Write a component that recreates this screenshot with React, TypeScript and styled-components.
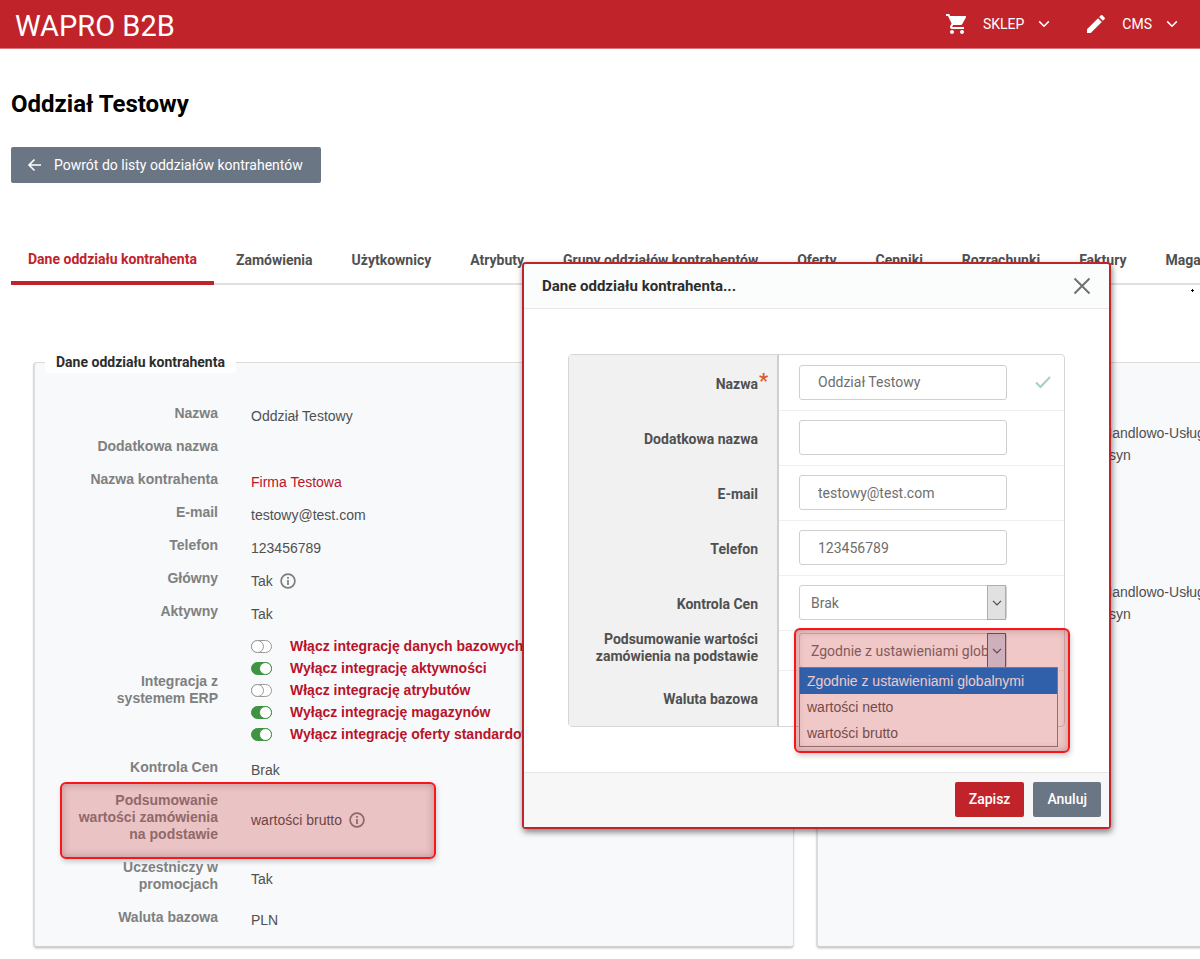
import React from "react";
import styled, { createGlobalStyle, css } from "styled-components";
import { MdShoppingCart, MdEdit } from "react-icons/md";

const GlobalStyle = createGlobalStyle`
  *, *::before, *::after { box-sizing: border-box; }
  body {
    margin: 0;
    background: #fff;
    font-family: Roboto, "Liberation Sans", sans-serif;
    font-size: 14px;
    color: #505050;
    overflow: hidden;
  }
  button, input, select { font: inherit; color: inherit; margin: 0; }
  a { color: inherit; text-decoration: none; }
`;

const Page = styled.div`
  position: relative;
  min-height: 100vh;
  overflow: hidden;
`;

const TopBar = styled.header`
  display: flex;
  align-items: center;
  justify-content: space-between;
  height: 49px;
  padding: 0 22px 0 15px;
  background: #c1232b;
  border-bottom: 1px solid #d9777c;
  color: #fff;
`;

const Brand = styled.a`
  padding-top: 4px;
  font-size: 29px;
  line-height: 32px;
`;

const TopNav = styled.nav`
  display: flex;
  gap: 34px;
`;

const TopNavButton = styled.button`
  display: flex;
  align-items: center;
  padding: 0;
  border: 0;
  background: none;
  gap: 14px;
  line-height: 24px;
  cursor: pointer;
`;

const Content = styled.main`
  padding-left: 11px;
`;

const Title = styled.h1`
  margin: 41px 0 28px;
  font-size: 24px;
  line-height: 29px;
  font-weight: 700;
  color: #000;
`;

const BackLink = styled.a`
  display: inline-flex;
  align-items: center;
  gap: 12px;
  height: 36px;
  padding: 0 18px 0 16px;
  border-radius: 2px;
  background: #6b7684;
  color: #fff;
`;

const Tabs = styled.nav`
  display: flex;
  gap: 5px;
  margin-top: 52px;
  height: 50px;
  box-shadow: inset 0 -2px #e0e0e0;
`;

const Tab = styled.a<{ $active?: boolean }>`
  flex: none;
  padding: 0 17px;
  line-height: 51px;
  font-weight: 700;
  white-space: nowrap;
  ${(p) => p.$active && css`
    line-height: 49px;
    color: #c1232b;
    box-shadow: inset 0 -4px #c1232b;
  `}
`;

const PointerMark = styled.svg`
  position: absolute;
  right: 6px;
  top: 289px;
`;

const Panels = styled.div`
  display: grid;
  grid-template-columns: 67% 67%;
  gap: 22px;
  padding: 0 31px 0 22px;
  margin-top: 67px;
`;

const panelSurface = css`
  min-width: 0;
  border: 1px solid #dcdcdc;
  border-left-width: 2px;
  border-bottom: 2px solid #cfcfcf;
  border-radius: 4px;
  background: #f7f9fb;
  box-shadow: 0 1px 2px #dddddd;
`;

const Panel = styled.fieldset`
  ${panelSurface}
  min-height: 596px;
  margin: 0;
  padding: 24px 0 12px 36px;
`;

const Legend = styled.legend`
  margin-left: -26px;
  padding: 0 11px;
  line-height: 21px;
  border-radius: 4px;
  background: #fff;
  font-weight: 700;
  color: #2d2d2d;
`;

const CompanyPanel = styled.section`
  ${panelSurface}
  display: grid;
  align-content: start;
  gap: 115px;
  margin-top: 10px;
  padding: 59px 0 0 284px;
  font-family: "Liberation Sans", Arial, sans-serif;
`;

const Company = styled.p`
  margin: 0;
  line-height: 22px;
  white-space: nowrap;
`;

const Details = styled.dl`
  margin: 0;
  font-family: "Liberation Sans", Arial, sans-serif;
  line-height: 17px;
`;

const DetailRow = styled.div`
  position: relative;
  display: grid;
  grid-template-columns: 147px 1fr;
  align-items: center;
  gap: 33px;
  padding: 8px 0;
  min-height: 33px;
`;

const IntegrationRow = styled(DetailRow)`
  padding: 7px 0 6px;
`;

const DetailLabel = styled.dt`
  text-align: right;
  font-weight: 700;
  color: #808080;
`;

const DetailValue = styled.dd`
  display: flex;
  align-items: center;
  gap: 7px;
  margin: 0;
  padding-top: 6px;
  height: 17px;
  white-space: nowrap;
  svg { flex: none; margin-bottom: 2px; }
`;

const AccentLink = styled.a`
  color: #b9132a;
`;

const ToggleList = styled.dd`
  display: grid;
  margin: 0;
`;

const ToggleRow = styled.label`
  display: flex;
  align-items: center;
  gap: 18px;
  height: 22px;
  font-weight: 700;
  color: #b9132a;
  white-space: nowrap;
`;

const Toggle = styled.input`
  appearance: none;
  position: relative;
  width: 21px;
  height: 13px;
  border: 1px solid #999;
  border-radius: 7px;
  background: #fff;
  &::after {
    content: "";
    position: absolute;
    top: -1px;
    left: -1px;
    width: 13px;
    height: 13px;
    border: 1px solid #999;
    border-radius: 50%;
    background: #fff;
  }
  &:checked {
    border-color: #3e9440;
    background: #3e9440;
  }
  &:checked::after {
    left: 7px;
    border-color: #3e9440;
  }
`;

const Highlight = styled.div`
  position: absolute;
  border: 2px solid #f8161b;
  border-radius: 6px;
  background: rgba(195, 35, 35, 0.25);
  box-shadow: inset 0 0 9px rgba(90, 20, 20, 0.3), 1px 3px 5px rgba(0, 0, 0, 0.18);
  pointer-events: none;
`;

const RowHighlight = styled(Highlight)`
  top: -2px;
  bottom: -8px;
  left: -11px;
  width: 376px;
`;

const Dialog = styled.section`
  position: absolute;
  top: 262px;
  right: 89px;
  width: 589px;
  border: 2px solid #c1232b;
  border-radius: 4px;
  background: #fff;
  box-shadow: 1px 3px 6px rgba(0, 0, 0, 0.5);
`;

const DialogHeader = styled.header`
  display: flex;
  align-items: center;
  justify-content: space-between;
  height: 45px;
  padding: 0 18px;
  border-bottom: 1px solid #e6e8e8;
  border-radius: 2px 2px 0 0;
  background: #fbfdfc;
`;

const DialogTitle = styled.h2`
  margin: 0;
  font-size: 15px;
  line-height: 20px;
  font-weight: 700;
  color: #2d2d2d;
`;

const CloseButton = styled.button`
  display: flex;
  padding: 0;
  border: 0;
  background: none;
  color: #707070;
`;

const Fields = styled.div`
  margin: 45px 44px;
  border: 1px solid #d6d6d6;
  border-radius: 4px;
`;

const Field = styled.div`
  display: grid;
  grid-template-columns: 210px 1fr;
  min-height: 55px;
  &:last-child { min-height: 56px; }
`;

const CompactField = styled(Field)`
  min-height: 40px;
`;

const FieldLabel = styled.label<{ $tight?: boolean }>`
  position: relative;
  display: flex;
  align-items: center;
  justify-content: flex-end;
  padding: ${(p) => (p.$tight ? "0 19px 4px 16px" : "3px 19px 0 16px")};
  border-right: 2px solid #cfcfcf;
  background: #f1f1f1;
  line-height: 17px;
  text-align: right;
  font-weight: 700;
  color: #505050;
`;

const Required = styled.span`
  position: absolute;
  right: 9px;
  top: 14px;
  font-size: 20px;
  line-height: 24px;
  color: #dc5a28;
`;

const FieldControl = styled.div<{ $tight?: boolean }>`
  position: relative;
  z-index: ${(p) => (p.$tight ? 1 : 0)};
  display: flex;
  align-items: center;
  justify-content: space-between;
  padding: ${(p) => (p.$tight ? "2px 12px 2px 20px" : "9px 12px 10px 20px")};
  ${Field}:not(:first-child) > & { border-top: 1px solid #efefef; }
`;

const TextInput = styled.input`
  width: 208px;
  height: 35px;
  padding: 0 18px;
  border: 1px solid #cfcfcf;
  border-radius: 3px;
  background: #fff;
  color: #6e6e6e;
`;

const SelectBox = styled.div`
  position: relative;
  width: 208px;
  height: 35px;
`;

const Select = styled.select`
  appearance: none;
  width: 100%;
  height: 100%;
  padding: 0 19px 0 11px;
  border: 1px solid #cfcfcf;
  border-radius: 3px;
  background: #fff;
  color: #6e6e6e;
`;

const SelectArrow = styled.span<{ $open?: boolean }>`
  position: absolute;
  top: 0;
  right: 1px;
  bottom: 0;
  display: grid;
  place-items: center;
  width: 19px;
  border: 1px solid ${(p) => (p.$open ? "#0f6cc4" : "#adadad")};
  background: ${(p) => (p.$open ? "#d2dff0" : "#e1e1e1")};
  pointer-events: none;
`;

const OptionList = styled.ul`
  position: absolute;
  top: 100%;
  left: 0;
  width: 259px;
  margin: -1px 0 0;
  padding: 0;
  border: 1px solid #868686;
  background: #fff;
  list-style: none;
  font-family: "Liberation Sans", Arial, sans-serif;
  color: #5a5a5a;
`;

const Option = styled.li<{ $selected?: boolean }>`
  padding: 0 7px;
  line-height: 26px;
  white-space: nowrap;
  ${(p) => p.$selected && css`
    background: #0075d7;
    color: #fff;
  `}
`;

const FieldHighlight = styled(Highlight)`
  top: -3px;
  left: 15px;
  width: 276px;
  height: 125px;
`;

const DialogFooter = styled.footer`
  display: flex;
  justify-content: flex-end;
  gap: 9px;
  padding: 9px 8px 10px;
  border-top: 1px solid #e6e6e6;
  background: #f7f7f7;
`;

const ActionButton = styled.button<{ $primary?: boolean }>`
  height: 35px;
  padding: 0 14px 2px;
  border: 0;
  border-radius: 2px;
  background: ${(p) => (p.$primary ? "#c1232b" : "#6b7684")};
  color: #fff;
  font-weight: 500;
`;

function Chevron({ size = 12 }: { size?: number }) {
  return (
    <svg width={size} height={size} viewBox="0 0 12 12" fill="none" stroke="currentColor" strokeWidth="1.5" aria-hidden="true">
      <path d="M1.2 3.4 6 8.2l4.8-4.8" />
    </svg>
  );
}

function InfoIcon() {
  return (
    <svg width="16" height="16" viewBox="0 0 16 16" fill="none" stroke="#7d7d7d" strokeWidth="1.7" aria-hidden="true">
      <circle cx="8" cy="8" r="6.900" />
      <path d="M8 7v5M8 4v1.700" />
    </svg>
  );
}

const tabs = [
  "Dane oddziału kontrahenta", "Zamówienia", "Użytkownicy", "Atrybuty",
  "Grupy oddziałów kontrahentów", "Oferty", "Cenniki", "Rozrachunki", "Faktury", "Magazyny",
];

const integrations = [
  { text: "Włącz integrację danych bazowych", on: false },
  { text: "Wyłącz integrację aktywności", on: true },
  { text: "Włącz integrację atrybutów", on: false },
  { text: "Wyłącz integrację magazynów", on: true },
  { text: "Wyłącz integrację oferty standardowej", on: true },
];

const textFields = [
  { id: "name", label: "Nazwa", value: "Oddział Testowy", required: true },
  { id: "extra-name", label: "Dodatkowa nazwa", value: "" },
  { id: "email", label: "E-mail", value: "testowy@test.com" },
  { id: "phone", label: "Telefon", value: "123456789" },
];

const summaryOptions = ["Zgodnie z ustawieniami globalnymi", "wartości netto", "wartości brutto"];

function Detail({ label, info, highlighted, children }: {
  label: string; info?: boolean; highlighted?: boolean; children?: React.ReactNode;
}) {
  return (
    <DetailRow>
      <DetailLabel>{label}</DetailLabel>
      <DetailValue>
        {children}
        {info && <InfoIcon />}
      </DetailValue>
      {highlighted && <RowHighlight />}
    </DetailRow>
  );
}

function BranchPanel() {
  return (
    <Panel>
      <Legend>Dane oddziału kontrahenta</Legend>
      <Details>
        <Detail label="Nazwa">Oddział Testowy</Detail>
        <Detail label="Dodatkowa nazwa" />
        <Detail label="Nazwa kontrahenta"><AccentLink href="#firma">Firma Testowa</AccentLink></Detail>
        <Detail label="E-mail">testowy@test.com</Detail>
        <Detail label="Telefon">123456789</Detail>
        <Detail label="Główny" info>Tak</Detail>
        <Detail label="Aktywny">Tak</Detail>
        <IntegrationRow>
          <DetailLabel>Integracja z systemem ERP</DetailLabel>
          <ToggleList>
            {integrations.map((item) => (
              <ToggleRow key={item.text}>
                <Toggle type="checkbox" defaultChecked={item.on} />
                {item.text}
              </ToggleRow>
            ))}
          </ToggleList>
        </IntegrationRow>
        <Detail label="Kontrola Cen">Brak</Detail>
        <Detail label="Podsumowanie wartości zamówienia na podstawie" info highlighted>wartości brutto</Detail>
        <Detail label="Uczestniczy w promocjach">Tak</Detail>
        <Detail label="Waluta bazowa">PLN</Detail>
      </Details>
    </Panel>
  );
}

function SummaryField() {
  return (
    <CompactField>
      <FieldLabel htmlFor="summary" $tight>Podsumowanie wartości zamówienia na podstawie</FieldLabel>
      <FieldControl $tight>
        <SelectBox>
          <Select id="summary">
            {summaryOptions.map((option) => <option key={option}>{option}</option>)}
          </Select>
          <SelectArrow $open><Chevron size={10} /></SelectArrow>
          <OptionList>
            {summaryOptions.map((option, index) => (
              <Option key={option} $selected={index === 0}>{option}</Option>
            ))}
          </OptionList>
        </SelectBox>
        <FieldHighlight />
      </FieldControl>
    </CompactField>
  );
}

function EditDialog() {
  return (
    <Dialog role="dialog" aria-labelledby="dialog-title">
      <DialogHeader>
        <DialogTitle id="dialog-title">Dane oddziału kontrahenta...</DialogTitle>
        <CloseButton type="button" aria-label="Zamknij">
          <svg width="18" height="18" viewBox="0 0 18 18" stroke="currentColor" strokeWidth="2" aria-hidden="true">
            <path d="M1.5 1.5l15 15M16.5 1.5l-15 15" />
          </svg>
        </CloseButton>
      </DialogHeader>
      <Fields>
        {textFields.map((field) => (
          <Field key={field.id}>
            <FieldLabel htmlFor={field.id}>
              {field.label}
              {field.required && <Required>*</Required>}
            </FieldLabel>
            <FieldControl>
              <TextInput id={field.id} defaultValue={field.value} />
              {field.required && (
                <svg width="18" height="14" viewBox="0 0 18 14" fill="none" stroke="#a5d3b5" strokeWidth="2" aria-hidden="true">
                  <path d="M2 7.500l4.500 4.500L16 2" />
                </svg>
              )}
            </FieldControl>
          </Field>
        ))}
        <Field>
          <FieldLabel htmlFor="price-control">Kontrola Cen</FieldLabel>
          <FieldControl>
            <SelectBox>
              <Select id="price-control"><option>Brak</option></Select>
              <SelectArrow><Chevron size={10} /></SelectArrow>
            </SelectBox>
          </FieldControl>
        </Field>
        <SummaryField />
        <Field>
          <FieldLabel as="span">Waluta bazowa</FieldLabel>
          <FieldControl />
        </Field>
      </Fields>
      <DialogFooter>
        <ActionButton type="button" $primary>Zapisz</ActionButton>
        <ActionButton type="button">Anuluj</ActionButton>
      </DialogFooter>
    </Dialog>
  );
}

export default function App() {
  return (
    <Page>
      <GlobalStyle />
      <TopBar>
        <Brand href="#start">WAPRO B2B</Brand>
        <TopNav>
          <TopNavButton type="button"><MdShoppingCart size={24} />SKLEP<Chevron /></TopNavButton>
          <TopNavButton type="button"><MdEdit size={24} />CMS<Chevron /></TopNavButton>
        </TopNav>
      </TopBar>
      <Content>
        <Title>Oddział Testowy</Title>
        <BackLink href="#lista">
          <svg width="15" height="14" viewBox="0 0 15 14" fill="none" stroke="currentColor" strokeWidth="1.6" aria-hidden="true">
            <path d="M14 7H2.500M7.500 1.500 2 7l5.500 5.500" />
          </svg>
          Powrót do listy oddziałów kontrahentów
        </BackLink>
        <Tabs>
          {tabs.map((tab, index) => (
            <Tab key={tab} href={`#tab-${index}`} $active={index === 0}>{tab}</Tab>
          ))}
        </Tabs>
        <PointerMark width="3" height="3" viewBox="0 0 3 3" aria-hidden="true">
          <path d="M1 0h1v1h1v1H2v1H1V2H0V1h1z" />
        </PointerMark>
        <Panels>
          <BranchPanel />
          <CompanyPanel>
            <Company>Handlowo-Usługowa<br />i syn</Company>
            <Company>Handlowo-Usługowa<br />i syn</Company>
          </CompanyPanel>
        </Panels>
      </Content>
      <EditDialog />
    </Page>
  );
}
